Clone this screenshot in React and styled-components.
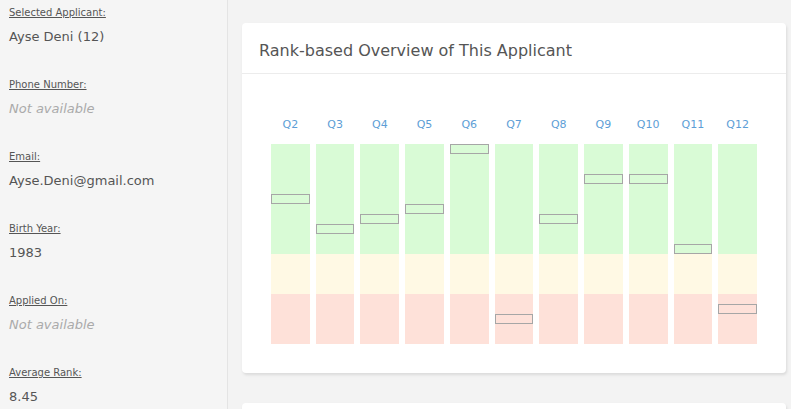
import React from 'react';
import styled, { createGlobalStyle } from 'styled-components';

const GlobalStyle = createGlobalStyle`
  html, body {
    margin: 0;
    padding: 0;
    background: #f3f3f3;
    font-family: 'DejaVu Sans', Verdana, sans-serif;
    color: #555;
  }
`

const applicant = {
  name: 'Ayse Deni (12)',
  phone: null,
  email: 'Ayse.Deni@gmail.com',
  birthYear: '1983',
  appliedOn: null,
  averageRank: '8.45'
}

// rank of this applicant per question (1 = best)
const ranks = [
  { q: 'Q2', rank: 6 },
  { q: 'Q3', rank: 9 },
  { q: 'Q4', rank: 8 },
  { q: 'Q5', rank: 7 },
  { q: 'Q6', rank: 1 },
  { q: 'Q7', rank: 18 },
  { q: 'Q8', rank: 8 },
  { q: 'Q9', rank: 4 },
  { q: 'Q10', rank: 4 },
  { q: 'Q11', rank: 11 },
  { q: 'Q12', rank: 17 }
]

const fields = [
  ['Selected Applicant:', applicant.name],
  ['Phone Number:', applicant.phone],
  ['Email:', applicant.email],
  ['Birth Year:', applicant.birthYear],
  ['Applied On:', applicant.appliedOn],
  ['Average Rank:', applicant.averageRank]
]

class App extends React.Component {
  render() {
    return (
      <Page>
        <GlobalStyle />
        <Sidebar>
          {fields.map(([label, value]) => (
            <Field key={label}>
              <Label>{label}</Label>
              <Value missing={!value}>{value || 'Not available'}</Value>
            </Field>
          ))}
        </Sidebar>
        <Main>
          <Card>
            <CardHeader>Rank-based Overview of This Applicant</CardHeader>
            <Chart>
              {ranks.map(r => (
                <Column key={r.q}>
                  <QLabel>{r.q}</QLabel>
                  <Bar>
                    <Zone size={110} color="#d9fbd6" />
                    <Zone size={40} color="#fff9e4" />
                    <Zone size={50} color="#fee1d9" />
                    <Marker style={{ top: (r.rank - 1) * 10 }} />
                  </Bar>
                </Column>
              ))}
            </Chart>
          </Card>
          <Card tall />
        </Main>
      </Page>
    );
  }
}

const Page = styled.div`
  display: flex;
  height: 100vh;
  overflow: hidden;
`

const Sidebar = styled.aside`
  width: 228px;
  flex-shrink: 0;
  box-sizing: border-box;
  padding: 7px 9px 0;
  background: #f5f5f5;
  border-right: 1px solid #e4e4e4;
`

const Field = styled.div`
  height: 72px;
`

const Label = styled.div`
  font-size: 10px;
  line-height: 12px;
  text-decoration: underline;
  color: #555;
`

const Value = styled.div`
  margin-top: 6px;
  font-size: 13px;
  line-height: 24px;
  color: ${props => props.missing ? '#aaa' : '#555'};
  font-style: ${props => props.missing ? 'italic' : 'normal'};
`

const Main = styled.main`
  flex: 1;
  display: flex;
  flex-direction: column;
  gap: 30px;
  padding: 23px 5px 0 14px;
`

const Card = styled.section`
  flex-shrink: 0;
  background: #fff;
  border-radius: 4px;
  box-shadow: 1px 2px 3px rgba(0, 0, 0, 0.1);
  min-height: ${props => props.tall ? '200px' : 'auto'};
`

const CardHeader = styled.h2`
  margin: 0;
  padding: 6px 17px 0;
  line-height: 44px;
  font-size: 16px;
  font-weight: normal;
  color: #555;
  border-bottom: 1px solid #ececec;
`

const Chart = styled.div`
  display: grid;
  grid-template-columns: repeat(11, 1fr);
  column-gap: 6px;
  padding: 44px 29px 29px;
`

const Column = styled.div`
  display: flex;
  flex-direction: column;
  align-items: stretch;
`

const QLabel = styled.div`
  font-size: 11px;
  line-height: 14px;
  text-align: center;
  color: #5d9ed6;
  margin-bottom: 12px;
`

const Bar = styled.div`
  position: relative;
  display: flex;
  flex-direction: column;
  height: 200px;
`

const Zone = styled.div`
  height: ${props => props.size}px;
  background: ${props => props.color};
`

const Marker = styled.div`
  position: absolute;
  left: 0;
  right: 0;
  height: 10px;
  box-sizing: border-box;
  border: 1px solid #a6a6a6;
`

export default App;
